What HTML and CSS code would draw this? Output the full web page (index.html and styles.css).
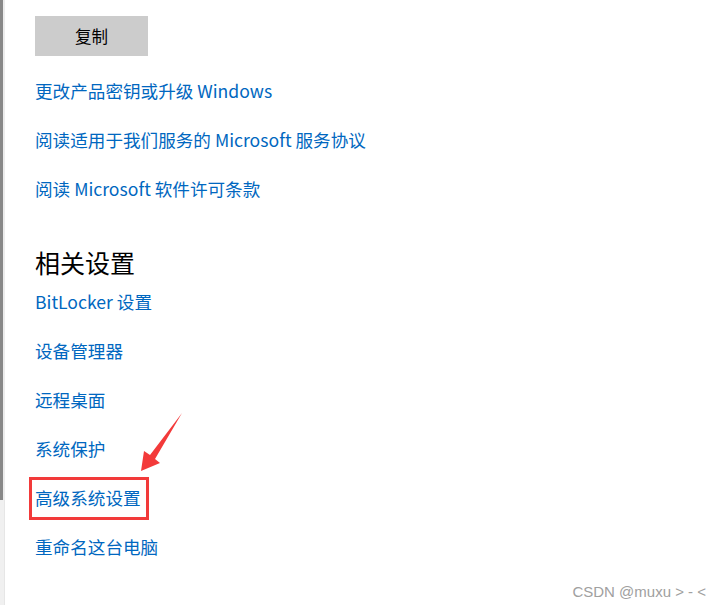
FILE: index.html
```html
<!DOCTYPE html>
<html lang="zh-CN">
<head>
<meta charset="utf-8">
<link rel="stylesheet" href="styles.css">
</head>
<body>
<div class="page">
  <div class="scrollbar">
    <div class="thumb"></div>
    <div class="track"></div>
  </div>
  <main class="content">
    <button class="copy-btn">复制</button>
    <ul class="links">
      <li><a>更改产品密钥或升级 Windows</a></li>
      <li><a>阅读适用于我们服务的 Microsoft 服务协议</a></li>
      <li><a>阅读 Microsoft 软件许可条款</a></li>
    </ul>
    <h2 class="heading">相关设置</h2>
    <ul class="links">
      <li><a>BitLocker 设置</a></li>
      <li><a>设备管理器</a></li>
      <li><a>远程桌面</a></li>
      <li><a>系统保护</a></li>
      <li class="marked"><a>高级系统设置</a><span class="mark-box"></span></li>
      <li><a>重命名这台电脑</a></li>
    </ul>
  </main>
  <svg class="arrow" width="60" height="70" viewBox="130 405 60 70">
    <polygon points="141,471 144,451 150,455 182,413 155,459 160,463" fill="#f33a3a"/>
  </svg>
  <div class="watermark">CSDN @muxu &gt; - &lt;</div>
</div>
</body>
</html>
```
FILE: styles.css
```css
html, body {
  margin: 0;
  padding: 0;
  background: #ffffff;
}
body {
  width: 721px;
  height: 605px;
  overflow: hidden;
  font-family: "Noto Sans CJK SC", "Noto Sans", sans-serif;
}
.page {
  position: relative;
  display: flex;
  width: 721px;
  height: 605px;
}
.scrollbar {
  width: 5px;
  display: flex;
  flex-direction: column;
}
.thumb {
  height: 500px;
  background: #888888;
  border-right: 2px solid #ececec;
}
.track {
  flex: 1;
  background: #f0f0f0;
  border-right: 1px solid #e6e6e6;
}
.content {
  padding: 16px 0 0 30px;
  flex: 1;
}
.copy-btn {
  display: block;
  width: 113px;
  height: 40px;
  border: none;
  background: #cccccc;
  color: #000;
  font-family: "Noto Sans CJK SC", sans-serif;
  font-size: 16.5px;
  padding: 0;
  margin: 0 0 10px 0;
}
.links {
  list-style: none;
  margin: 0;
  padding: 0;
}
.links li {
  height: 49px;
  line-height: 49px;
  font-size: 17.6px;
  white-space: nowrap;
}
.links a {
  color: #0067c0;
  text-decoration: none;
}
.heading {
  margin: 36px 0 2px 0;
  font-size: 25px;
  line-height: 26px;
  font-weight: normal;
  color: #000;
}
.marked {
  position: relative;
}
.mark-box {
  position: absolute;
  left: -6px;
  top: 4px;
  width: 114px;
  height: 37px;
  border: 3px solid #f23a3a;
}
.arrow {
  position: absolute;
  left: 130px;
  top: 405px;
}
.watermark {
  position: absolute;
  right: 15px;
  bottom: 5px;
  font-family: "Liberation Sans", Arial, sans-serif;
  font-size: 15px;
  color: #a0a0a0;
}
```
